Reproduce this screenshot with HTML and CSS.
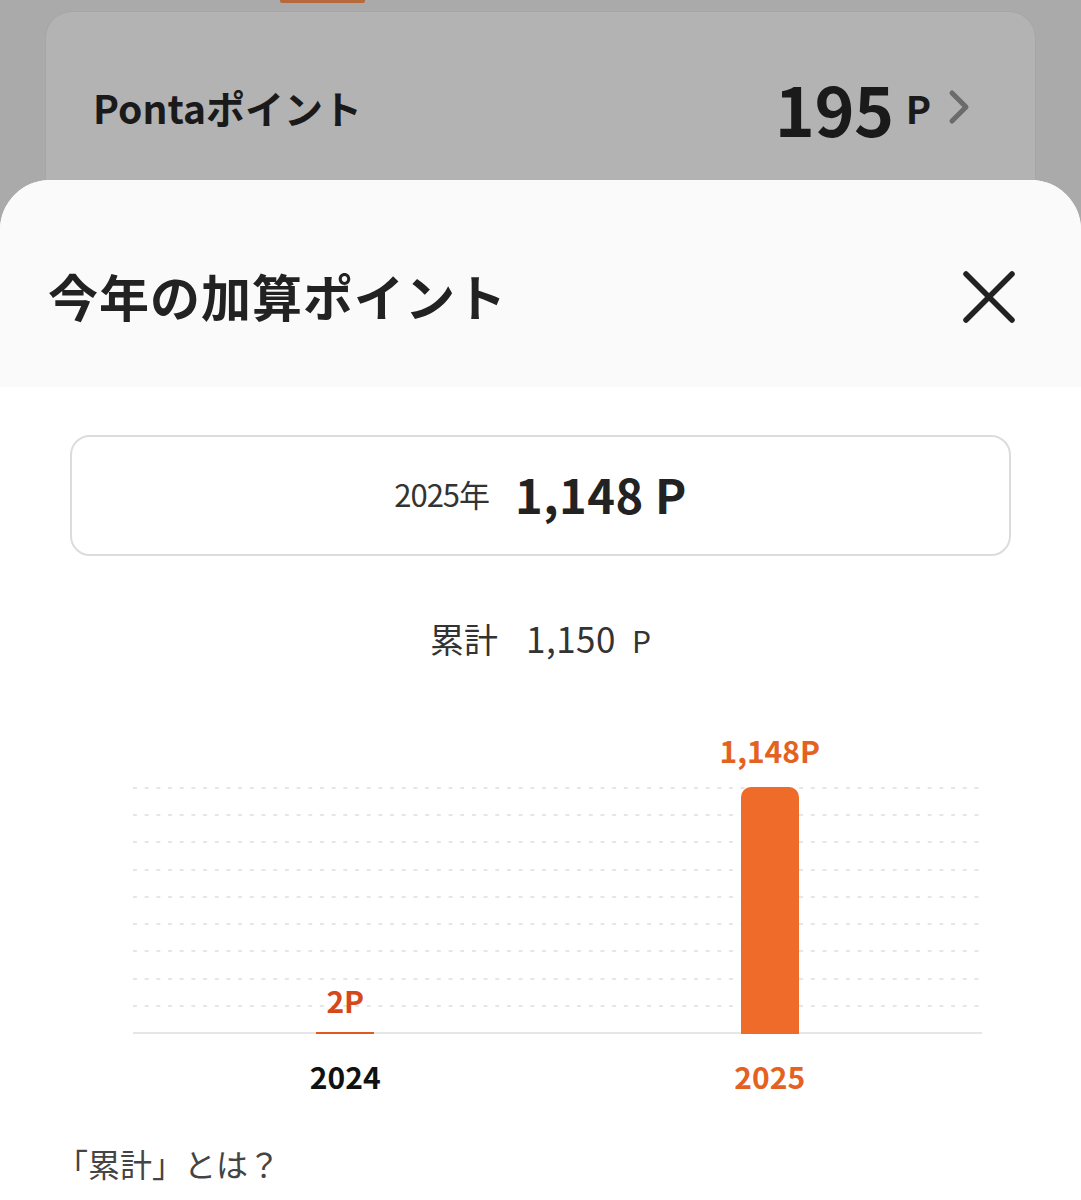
FILE: index.html
```html
<!DOCTYPE html>
<html lang="ja">
<head>
<meta charset="utf-8">
<title>今年の加算ポイント</title>
<link rel="stylesheet" href="styles.css">
</head>
<body>
<div class="backdrop">
  <div class="tab-indicator"></div>
  <div class="card">
    <div class="card-row">
      <span class="card-label">Pontaポイント</span>
      <span class="card-value"><span class="num">195</span><span class="unit">P</span>
        <svg class="chev" width="24" height="36" viewBox="0 0 24 36"><polyline points="5,4 19,18 5,32" fill="none" stroke="#6b6b6b" stroke-width="5" stroke-linecap="round" stroke-linejoin="round"/></svg>
      </span>
    </div>
  </div>
</div>

<div class="sheet">
  <div class="sheet-header">
    <h1 class="sheet-title">今年の加算ポイント</h1>
    <svg class="close" width="52" height="52" viewBox="0 0 52 52"><path d="M3 3 L49 49 M49 3 L3 49" stroke="#222" stroke-width="5.5" stroke-linecap="round"/></svg>
  </div>
  <div class="sheet-body">
    <div class="year-box">
      <span class="year-box-label">2025年</span>
      <span class="year-box-value">1,148 P</span>
    </div>
    <div class="total"><span class="total-label">累計</span><span class="total-num">1,150</span><span class="total-unit">P</span></div>

    <div class="chart">
      <div class="plot">
        <div class="gridlines">
          <div class="gl"></div><div class="gl"></div><div class="gl"></div>
          <div class="gl"></div><div class="gl"></div><div class="gl"></div>
          <div class="gl"></div><div class="gl"></div><div class="gl"></div>
          <div class="gl base"></div>
        </div>
        <div class="cols">
          <div class="col">
            <span class="val val-small">2P</span>
            <div class="bar bar-small"></div>
          </div>
          <div class="col">
            <span class="val">1,148P</span>
            <div class="bar" style="height:247px"></div>
          </div>
        </div>
      </div>
      <div class="years">
        <span class="year">2024</span>
        <span class="year year-current">2025</span>
      </div>
    </div>

    <p class="about">「累計」とは？</p>
  </div>
</div>
</body>
</html>
```
FILE: styles.css
```css
html, body {
  margin: 0;
  padding: 0;
}
body {
  background: #a9a9a9;
  font-family: "Noto Sans CJK JP", "Noto Sans", sans-serif;
  color: #222;
  width: 1081px;
  height: 1200px;
  overflow: hidden;
}
.backdrop {
  height: 230px;
  overflow: hidden;
  background: #aaaaaa;
}
.tab-indicator {
  width: 85px;
  height: 3px;
  margin-left: 280px;
  background: #b5693d;
  border-radius: 0 0 2px 2px;
}
.card {
  margin: 9px 46px 0;
  height: 300px;
  background: #b3b3b3;
  border-radius: 26px;
  box-shadow: 0 0 0 1px #a6a6a6;
}
.card-row {
  display: flex;
  align-items: center;
  justify-content: space-between;
  height: 80px;
  padding: 55px 64px 0 47px;
}
.card-label {
  font-size: 39px;
  font-weight: 700;
  color: #1a1a1a;
}
.card-value {
  display: flex;
  align-items: center;
  color: #1a1a1a;
}
.card-value .num {
  font-size: 68px;
  font-weight: 700;
  letter-spacing: -0.5px;
}
.card-value .unit {
  font-size: 38px;
  font-weight: 700;
  margin-left: 12px;
}
.chev {
  margin-left: 16px;
}
.sheet {
  position: relative;
  margin-top: -50px;
  background: #fff;
  border-radius: 50px 50px 0 0;
  overflow: hidden;
  height: 1020px;
}
.sheet-header {
  background: #fafafa;
  height: 185px;
  padding: 22px 66px 0 48px;
  display: flex;
  align-items: center;
  justify-content: space-between;
}
.sheet-title {
  margin: 0;
  font-size: 50px;
  font-weight: 700;
  color: #222;
  letter-spacing: 1px;
}
.close {
  margin-top: 4px;
}
.sheet-body {
  padding: 48px 70px 0;
}
.year-box {
  box-sizing: border-box;
  height: 121px;
  padding-bottom: 4px;
  border: 2px solid #dcdcdc;
  border-radius: 20px;
  display: flex;
  align-items: center;
  justify-content: center;
  gap: 26px;
}
.year-box-label {
  font-size: 31px;
  color: #333;
  letter-spacing: -1px;
}
.year-box-value {
  font-size: 47px;
  font-weight: 700;
  color: #222;
  letter-spacing: 0.5px;
}
.total {
  margin-top: 58px;
  line-height: 48px;
  display: flex;
  justify-content: center;
  align-items: baseline;
  color: #333;
}
.total-label {
  font-size: 34px;
  margin-right: 28px;
}
.total-num {
  font-size: 35px;
  letter-spacing: 0.5px;
}
.total-unit {
  font-size: 30px;
  margin-left: 16px;
}
.chart {
  margin: 58px 29px 0 63px;
}
.plot {
  position: relative;
  height: 312px;
}
.gridlines {
  position: absolute;
  left: 0;
  right: 0;
  bottom: 0;
  height: 247px;
  display: flex;
  flex-direction: column;
  justify-content: space-between;
}
.gl {
  height: 2px;
  background-image: linear-gradient(to right, #e6e6e6 0 4px, transparent 4px);
  background-size: 11.7px 2px;
}
.gl.base {
  background: #e6e6e6;
}
.cols {
  position: relative;
  height: 100%;
  display: grid;
  grid-template-columns: 1fr 1fr;
  align-items: end;
}
.col {
  display: flex;
  flex-direction: column;
  align-items: center;
}
.val {
  font-size: 30px;
  font-weight: 700;
  line-height: 36px;
  color: #e4621f;
  margin-bottom: 19px;
}
.val-small {
  color: #d5481a;
  margin-bottom: 14px;
}
.bar {
  width: 58px;
  background: #ee6b2a;
  border-radius: 10px 10px 0 0;
}
.bar-small {
  height: 2px;
  border-radius: 0;
  background: #de5a22;
}
.years {
  display: grid;
  grid-template-columns: 1fr 1fr;
  margin-top: 22px;
  text-align: center;
}
.year {
  font-size: 30px;
  font-weight: 700;
  line-height: 40px;
  color: #111;
}
.year-current {
  color: #e4621f;
}
.about {
  margin: 45px 0 0 -14px;
  font-size: 32px;
  line-height: 44px;
  color: #444;
}
```
